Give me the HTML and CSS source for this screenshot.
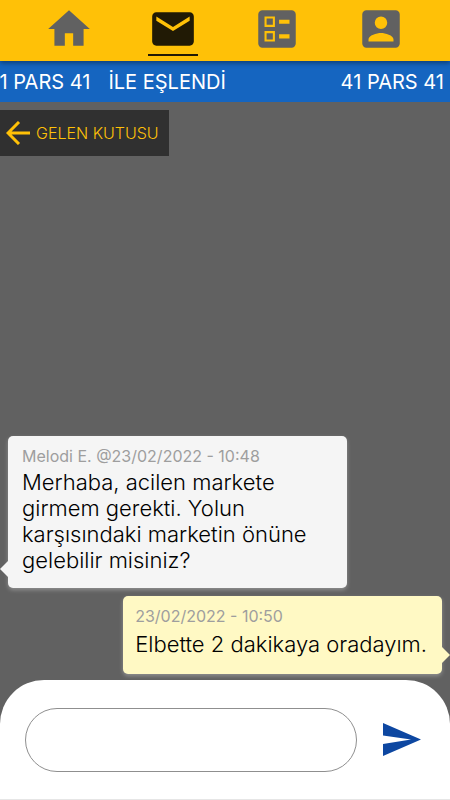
FILE: index.html
```html
<!DOCTYPE html>
<html lang="tr">
<head>
    <meta charset="UTF-8">
    <meta name="viewport" content="width=device-width, initial-scale=1.0">
    <title>Mesajlar</title>
    <link rel="stylesheet" href="styles.css">
</head>
<body>
    <nav class="tabs">
        <a class="tab" href="#home" aria-label="Ana sayfa">
            <svg viewBox="0 0 24 24"><path d="M10 20v-6h4v6h5v-8h3L12 3 2 12h3v8z"/></svg>
        </a>
        <a class="tab active" href="#inbox" aria-label="Mesajlar">
            <svg viewBox="0 0 24 24"><path d="M20 4H4c-1.100 0-1.990.9-1.990 2L2 18c0 1.100.9 2 2 2h16c1.100 0 2-.9 2-2V6c0-1.100-.9-2-2-2zm0 4l-8 5-8-5V6l8 5 8-5v2z"/></svg>
        </a>
        <a class="tab" href="#list" aria-label="Liste">
            <svg viewBox="0 0 24 24"><path fill-rule="evenodd" d="M5 3h14a2 2 0 0 1 2 2v14a2 2 0 0 1-2 2H5a2 2 0 0 1-2-2V5a2 2 0 0 1 2-2zM13 7.500h5v2h-5zM13 14.500h5v2h-5zM6 6h5v5H6zM7 7v3h3V7zM6 13h5v5H6zM7 14v3h3v-3z"/></svg>
        </a>
        <a class="tab" href="#profile" aria-label="Profil">
            <svg viewBox="0 0 24 24"><path fill-rule="evenodd" d="M5 3h14a2 2 0 0 1 2 2v14a2 2 0 0 1-2 2H5a2 2 0 0 1-2-2V5a2 2 0 0 1 2-2zM12 6a3 3 0 1 0 0 6 3 3 0 0 0 0-6zM18 18v-1c0-2-4-3.100-6-3.100S6 15 6 17v1z"/></svg>
        </a>
    </nav>

    <div class="ticker">
        <span class="plate">41 PARS 41</span>
        <span class="match">İLE EŞLENDİ</span>
        <span class="plate">41 PARS 41</span>
    </div>

    <main class="chat">
        <button class="back" type="button">
            <svg viewBox="0 0 24 24"><path d="M24 12H2M13 1L2 12l11 11"/></svg>
            GELEN KUTUSU
        </button>

        <div class="messages">
            <div class="message received">
                <div class="meta">Melodi E. @23/02/2022 - 10:48</div>
                <div class="text">Merhaba, acilen markete girmem gerekti. Yolun karşısındaki marketin önüne gelebilir misiniz?</div>
            </div>
            <div class="message sent">
                <div class="meta">23/02/2022 - 10:50</div>
                <div class="text">Elbette 2 dakikaya oradayım.</div>
            </div>
        </div>
    </main>

    <form class="composer">
        <input class="field" type="text" aria-label="Mesaj">
        <button class="send" type="button" aria-label="Gönder">
            <svg viewBox="0 0 38 34"><path d="M0 0l38 16.500L0 33V21l28-4.500L0 12.500z"/></svg>
        </button>
    </form>
</body>
</html>
```

FILE: styles.css
```css
* { box-sizing: border-box; }
body {
    margin: 0;
    min-height: 100vh;
    display: flex;
    flex-direction: column;
    font-family: Inter, "Liberation Sans", sans-serif;
    background-color: #616161;
}
svg { display: block; }

.tabs {
    display: flex;
    padding: 4px 17px 5px;
    background-color: #ffc107;
    box-shadow: 0 2px 5px rgba(0, 0, 0, 0.4);
    z-index: 1;
}
.tab {
    flex: 1;
    display: flex;
    justify-content: center;
    color: #616161;
}
.tab svg {
    width: 50px;
    height: 52px;
    padding-bottom: 2px;
    fill: currentColor;
}
.tab.active { color: #211a05; }
.tab.active svg {
    padding-bottom: 0;
    border-bottom: 2px solid currentColor;
}

.ticker {
    display: flex;
    padding: 1px 6px 0 0;
    overflow: hidden;
    white-space: nowrap;
    font-size: 20px;
    line-height: 40px;
    color: #fff;
    background-color: #1565c0;
}
.plate:first-child {
    margin-left: -13px;
    margin-right: 18px;
}
.plate:last-child { margin-left: auto; }

.chat {
    flex: 1;
    display: flex;
    flex-direction: column;
    align-items: flex-start;
    padding: 8px 8px 6px 0;
}
.back {
    display: flex;
    align-items: center;
    gap: 6px;
    height: 46px;
    padding: 0 10px 0 6px;
    border: 0;
    font-family: inherit;
    font-size: 16px;
    font-weight: 300;
    color: #ffc107;
    background-color: #303030;
}
.back svg {
    width: 24px;
    height: 24px;
    fill: none;
    stroke: currentColor;
    stroke-width: 3;
}

.messages {
    align-self: stretch;
    display: flex;
    flex-direction: column;
    gap: 8px;
    margin-top: auto;
    padding-left: 8px;
}
.message {
    position: relative;
    border-radius: 5px;
    box-shadow: 0 2px 4px rgba(255, 255, 255, 0.3);
}
.message::after {
    content: "";
    position: absolute;
    bottom: 11px;
    border: 8px solid transparent;
}
.received {
    width: 78%;
    padding: 9px 14px 15px;
    background-color: #f5f5f5;
}
.received::after {
    right: 100%;
    border-left: 0;
    border-right-color: #f5f5f5;
}
.sent {
    align-self: flex-end;
    padding: 9px 15px 15px 12px;
    background-color: #fff9c4;
}
.sent::after {
    left: 100%;
    border-right: 0;
    border-left-color: #fff9c4;
}
.meta {
    padding-bottom: 2px;
    font-size: 16px;
    line-height: 22px;
    color: #9e9e9e;
}
.text {
    font-size: 22px;
    font-weight: 300;
    line-height: 26px;
    color: #000;
}
.sent .text { line-height: 30px; }

.composer {
    display: flex;
    align-items: center;
    gap: 26px;
    padding: 28px 29px 27px 25px;
    border-bottom: 1px solid #e6e6e6;
    border-radius: 44px 44px 0 0;
    background-color: #fff;
}
.field {
    flex: 1;
    min-width: 0;
    height: 64px;
    padding: 0 24px;
    border: 1px solid #8f8f8f;
    border-radius: 32px;
    font-family: inherit;
    font-size: 22px;
    background-color: #fff;
}
.send {
    padding: 0;
    border: 0;
    background: none;
}
.send svg {
    width: 38px;
    height: 34px;
    fill: #0d47a1;
}
```
